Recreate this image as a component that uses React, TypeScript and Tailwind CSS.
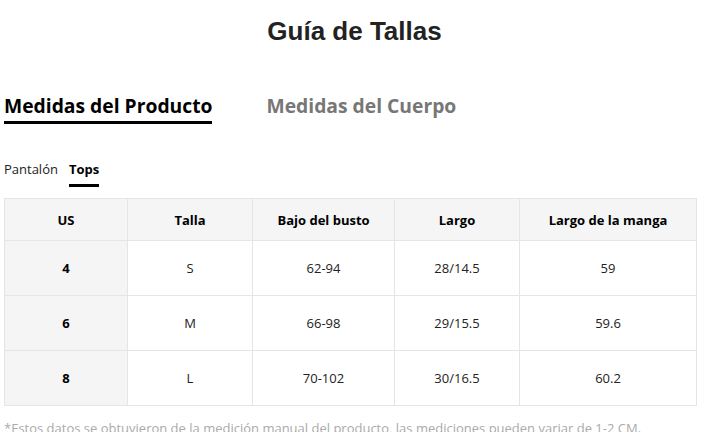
const headers = ["US", "Talla", "Bajo del busto", "Largo", "Largo de la manga"];
const widths = ["w-[123px]", "w-[125px]", "w-[142px]", "w-[125px]", "w-[177px]"];

const rows = [
  ["4", "S", "62-94", "28/14.5", "59"],
  ["6", "M", "66-98", "29/15.5", "59.6"],
  ["8", "L", "70-102", "30/16.5", "60.2"],
];

const font = { fontFamily: '"Open Sans", "Noto Sans", sans-serif' };

export default function App() {
  return (
    <div className="min-h-screen bg-white text-[#222]" style={font}>
      <h1
        className="pt-[16px] text-center text-[26px] font-bold leading-[30px] text-[#222]"
        style={{ fontFamily: '"Liberation Sans", Arial, sans-serif' }}
      >
        Guía de Tallas
      </h1>

      <div className="pl-1 pr-[13px]">
        {/* main tabs */}
        <div className="mt-[46px] flex gap-[54px]">
          <div className="border-b-[3px] border-black pb-[1px] text-[19.3px] font-bold leading-[28px] text-black">
            Medidas del Producto
          </div>
          <div className="pb-[1px] text-[19.3px] font-bold leading-[28px] text-[#777]">
            Medidas del Cuerpo
          </div>
        </div>

        {/* sub tabs */}
        <div className="mt-[36px] flex gap-[11px] text-[13px] leading-[18px]">
          <div className="text-[#222]">Pantalón</div>
          <div className="border-b-[3px] border-black pb-[6px] font-bold text-black">Tops</div>
        </div>

        <table className="mt-[11px] w-full table-fixed border-collapse text-center text-[13px] text-black">
          <thead>
            <tr className="h-[42px] bg-[#f5f5f5]">
              {headers.map((h, i) => (
                <th key={h} className={`${widths[i]} border border-[#e5e5e5] pt-[2px] font-bold`}>
                  {h}
                </th>
              ))}
            </tr>
          </thead>
          <tbody>
            {rows.map((r) => (
              <tr key={r[0]} className="h-[55px]">
                {r.map((c, i) => (
                  <td
                    key={i}
                    className={
                      i === 0
                        ? "border border-[#e5e5e5] bg-[#f5f5f5] pt-[2px] font-bold"
                        : "border border-[#e5e5e5] pt-[2px] text-[#222]"
                    }
                  >
                    {c}
                  </td>
                ))}
              </tr>
            ))}
          </tbody>
        </table>

        <p className="mt-[13px] text-[13px] leading-[18px] text-[#aaa]">
          *Estos datos se obtuvieron de la medición manual del producto, las mediciones pueden variar de 1-2 CM.
        </p>
      </div>
    </div>
  );
}
